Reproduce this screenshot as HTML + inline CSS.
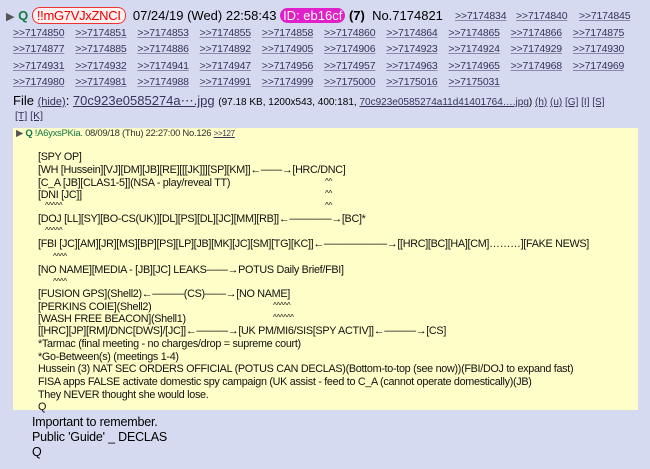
<!DOCTYPE html>
<html><head><meta charset="utf-8"><style>
body{margin:0;background:#d6daf0;width:650px;height:469px;overflow:hidden;font-family:"Liberation Sans",Arial,sans-serif;color:#000;position:relative}
.a{position:absolute;white-space:nowrap}
.l{font-size:10.5px;color:#34345c;text-decoration:underline;text-decoration-color:#8888aa;letter-spacing:-0.2px}
.img{position:absolute;left:13px;top:128px;width:625px;height:282px;background:#fefec8}
.t{position:absolute;left:25px;font-size:10.8px;white-space:nowrap;color:#111;letter-spacing:-0.3px}
</style></head><body>
<div class="a" style="left:6px;top:8px;font-size:13px;">
<span style="color:#555;font-size:11px">▶</span> <b style="color:#117743">Q</b> <span style="color:#e00;border:1px solid #e33;border-radius:8px;padding:0 4px;background:#fff0f0;letter-spacing:-0.3px">!!mG7VJxZNCI</span>&nbsp; 07/24/19 (Wed) 22:58:43 <span style="background:#e020c8;color:#fff;border-radius:8px;padding:0 3px">ID: eb16cf</span> <b>(7)</b>&nbsp; No.7174821</div>
<div id="links"></div>
<div class="a" style="left:13px;top:93px;font-size:13px">File <span style="font-size:11px;color:#34345c;text-decoration:underline">(hide)</span>: <span style="color:#34345c;text-decoration:underline">70c923e0585274a⋯.jpg</span> <span style="font-size:10px">(97.18 KB, 1200x543, 400:181, <u style="color:#34345c">70c923e0585274a11d41401764….jpg</u>) <u style="color:#34345c">(h)</u> <u style="color:#34345c">(u)</u> <u style="color:#34345c">[G]</u> <u style="color:#34345c">[I]</u> <u style="color:#34345c">[S]</u></span></div>
<div class="a" style="left:15px;top:110px;font-size:10.5px;color:#34345c"><u>[T]</u> <u>[K]</u></div>
<div class="img">
<div class="t" style="left:3px;top:0px;font-size:9.5px;color:#117743"><span style="color:#555">▶</span> <b>Q</b> !A6yxsPKia. <span style="color:#333">08/09/18 (Thu) 22:27:00 No.126 <u style="color:#34345c;font-size:8px">&gt;&gt;127</u></span></div>
<div class="t" style="top:23px">[SPY OP]</div>
<div class="t" style="top:36px">[WH [Hussein][VJ][DM][JB][RE][[[JK]]][SP][KM]]←——→[HRC/DNC]</div>
<div class="t" style="top:49px">[C_A [JB][CLAS1-5]](NSA - play/reveal TT)<span style="position:absolute;left:287px;font-size:8px">^^</span></div>
<div class="t" style="top:61px">[DNI [JC]]<span style="position:absolute;left:287px;font-size:8px">^^</span></div>
<div class="t" style="top:73px;left:32px;font-size:8px">^^^^^<span style="position:absolute;left:280px">^^</span></div>
<div class="t" style="top:85px">[DOJ [LL][SY][BO-CS(UK)][DL][PS][DL][JC][MM][RB]]←————→[BC]*</div>
<div class="t" style="top:98px;left:32px;font-size:8px">^^^^^</div>
<div class="t" style="top:110px">[FBI [JC][AM][JR][MS][BP][PS][LP][JB][MK][JC][SM][TG][KC]]←——————→[[HRC][BC][HA][CM]………][FAKE NEWS]</div>
<div class="t" style="top:124px;left:40px;font-size:8px">^^^^</div>
<div class="t" style="top:136px">[NO NAME][MEDIA - [JB][JC] LEAKS——→POTUS Daily Brief/FBI]</div>
<div class="t" style="top:149px;left:40px;font-size:8px">^^^^</div>
<div class="t" style="top:160px">[FUSION GPS](Shell2)←———(CS)——→[NO NAME]</div>
<div class="t" style="top:173px">[PERKINS COIE](Shell2)<span style="position:absolute;left:235px;font-size:8px">^^^^^</span></div>
<div class="t" style="top:185px">[WASH FREE BEACON](Shell1)<span style="position:absolute;left:235px;font-size:8px">^^^^^^</span></div>
<div class="t" style="top:197px">[[HRC][JP][RM]/DNC[DWS]/[JC]]←———→[UK PM/MI6/SIS[SPY ACTIV]]←———→[CS]</div>
<div class="t" style="top:210px">*Tarmac (final meeting - no charges/drop = supreme court)</div>
<div class="t" style="top:223px">*Go-Between(s) (meetings 1-4)</div>
<div class="t" style="top:235px">Hussein (3) NAT SEC ORDERS OFFICIAL (POTUS CAN DECLAS)(Bottom-to-top (see now))(FBI/DOJ to expand fast)</div>
<div class="t" style="top:248px">FISA apps FALSE activate domestic spy campaign (UK assist - feed to C_A (cannot operate domestically)(JB)</div>
<div class="t" style="top:261px">They NEVER thought she would lose.</div>
<div class="t" style="top:273px">Q</div>
</div>
<div class="a" style="left:32px;top:415px;font-size:12.5px;line-height:15px;letter-spacing:-0.2px">Important to remember.<br>Public 'Guide' _ DECLAS<br>Q</div>
<script>
var first=[[455,"7174834"],[516,"7174840"],[579,"7174845"]];
var rows=[
["7174850","7174851","7174853","7174855","7174858","7174860","7174864","7174865","7174866","7174875"],
["7174877","7174885","7174886","7174892","7174905","7174906","7174923","7174924","7174929","7174930"],
["7174931","7174932","7174941","7174947","7174956","7174957","7174963","7174965","7174968","7174969"],
["7174980","7174981","7174988","7174991","7174999","7175000","7175016","7175031"]];
var h="";
first.forEach(function(p){h+='<div class="a l" style="left:'+p[0]+'px;top:10px">&gt;&gt;'+p[1]+'</div>';});
for(var r=0;r<4;r++)rows[r].forEach(function(n,i){h+='<div class="a l" style="left:'+(13+i*62.2)+'px;top:'+(27+r*16.3)+'px">&gt;&gt;'+n+'</div>';});
document.getElementById('links').innerHTML=h;
</script>
</body></html>
